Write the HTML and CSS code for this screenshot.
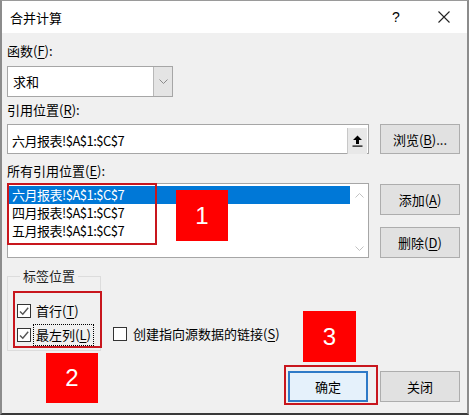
FILE: index.html
```html
<!DOCTYPE html>
<html lang="zh-CN">

<head>
    <meta charset="UTF-8">
    <title>合并计算</title>
    <link rel="stylesheet" href="styles.css">
</head>

<body>
    <div class="dialog">
        <div class="titlebar">
            <span class="title">合并计算</span>
            <span class="cap-btn help">?</span>
            <span class="cap-btn close">
                <svg width="12" height="12" viewBox="0 0 12 12"><path d="M0.5 0.5L11.5 11.5M11.5 0.5L0.5 11.5" stroke="#222" stroke-width="1.1" fill="none"/></svg>
            </span>
        </div>

        <div class="content">
            <div class="label lbl-func">函数(<u>F</u>):</div>
            <div class="combo">
                <span class="combo-text">求和</span>
                <span class="combo-arrow">
                    <svg width="9" height="5" viewBox="0 0 9 5"><path d="M0.5 0.5L4.5 4.5L8.5 0.5" stroke="#8a8a8a" fill="none"/></svg>
                </span>
            </div>

            <div class="label lbl-ref">引用位置(<u>R</u>):</div>
            <div class="row ref-row">
                <div class="ref-input">
                    <span class="ref-text ref-str">六月报表!$A$1:$C$7</span>
                    <span class="collapse-btn">
                        <svg width="11" height="12" viewBox="0 0 11 12"><path d="M5.5 0.5L10 5H7V9H4V5H1Z" fill="#000"/><rect x="0.5" y="10.5" width="10" height="1.2" fill="#000"/></svg>
                    </span>
                </div>
                <button class="btn">浏览(<u>B</u>)...</button>
            </div>

            <div class="label lbl-all">所有引用位置(<u>E</u>):</div>
            <div class="row list-row">
                <div class="listbox">
                    <div class="items">
                        <div class="item selected"><span class="ref-str">六月报表!$A$1:$C$7</span></div>
                        <div class="item"><span class="ref-str">四月报表!$A$1:$C$7</span></div>
                        <div class="item"><span class="ref-str">五月报表!$A$1:$C$7</span></div>
                    </div>
                    <div class="scroll">
                        <svg width="9" height="5" viewBox="0 0 9 5"><path d="M0.5 4.5L4.5 0.5L8.5 4.5" stroke="#c2c2c2" fill="none"/></svg>
                        <svg width="9" height="5" viewBox="0 0 9 5"><path d="M0.5 0.5L4.5 4.5L8.5 0.5" stroke="#c2c2c2" fill="none"/></svg>
                    </div>
                </div>
                <div class="btn-col">
                    <button class="btn">添加(<u>A</u>)</button>
                    <button class="btn">删除(<u>D</u>)</button>
                </div>
            </div>

            <div class="row bottom-row">
                <fieldset class="group">
                    <legend>标签位置</legend>
                    <div class="check">
                        <span class="box checked"></span>
                        <span class="check-label">首行(<u>T</u>)</span>
                    </div>
                    <div class="check">
                        <span class="box checked"></span>
                        <span class="check-label focused">最左列(<u>L</u>)</span>
                    </div>
                </fieldset>
                <div class="check link-check">
                    <span class="box"></span>
                    <span class="check-label">创建指向源数据的链接(<u>S</u>)</span>
                </div>
            </div>

            <div class="row actions">
                <button class="btn default">确定</button>
                <button class="btn">关闭</button>
            </div>
        </div>
    </div>

    <!-- annotations drawn over the dialog -->
    <div class="frame frame-list"></div>
    <div class="tag tag-1">1</div>
    <div class="frame frame-checks"></div>
    <div class="tag tag-2">2</div>
    <div class="tag tag-3">3</div>
    <div class="frame frame-ok"></div>
</body>

</html>
```

FILE: styles.css
```css
body {
    margin: 0;
    position: relative;
    font-family: "Noto Sans CJK SC", "Noto Sans", sans-serif;
    font-size: 13px;
    color: #000;
}

.dialog {
    width: 469px;
    height: 415px;
    box-sizing: border-box;
    background-color: #f0f0f0;
    border-top: 1px solid #9a9a9a;
    border-left: 2px solid #8c8c8c;
    border-right: 2px solid #8c8c8c;
    border-bottom: 2px solid #3a3a3a;
    display: flex;
    flex-direction: column;
}

.titlebar {
    height: 32px;
    background-color: #fff;
    display: flex;
    align-items: center;
    padding-left: 8px;
}

.title {
    flex: 1;
    font-size: 13px;
}

.cap-btn {
    width: 46px;
    height: 32px;
    display: flex;
    justify-content: center;
    align-items: center;
}

.help {
    font-size: 14px;
    font-family: "Liberation Sans", sans-serif;
    width: 50px;
}

.content {
    padding: 0 7px 0 5px;
}

.label {
    height: 18px;
    line-height: 18px;
}

.lbl-func {
    margin-top: 9px;
}

.lbl-ref {
    margin-top: 4px;
}

.lbl-all {
    margin-top: 8px;
}

u {
    text-decoration-thickness: 1px;
    text-underline-offset: 2px;
}

.row {
    display: flex;
}

.ref-str {
    font-size: 13px;
    letter-spacing: -0.5px;
}

.combo {
    margin-top: 6px;
    width: 166px;
    height: 31px;
    box-sizing: border-box;
    border: 1px solid #a6a6a6;
    background-color: #fff;
    display: flex;
}

.combo-text {
    flex: 1;
    line-height: 29px;
    padding-left: 5px;
}

.combo-arrow {
    width: 18px;
    background-color: #e4e4e4;
    border-left: 1px solid #b8b8b8;
    display: flex;
    justify-content: center;
    align-items: center;
}

.ref-row {
    margin-top: 5px;
    justify-content: space-between;
}

.ref-input {
    width: 362px;
    height: 30px;
    box-sizing: border-box;
    border: 1px solid #a6a6a6;
    background-color: #fff;
    display: flex;
    align-items: center;
    padding: 2px 1px 0 4px;
}

.ref-text {
    flex: 1;
}

.collapse-btn {
    width: 20px;
    height: 26px;
    box-sizing: border-box;
    background-color: #e8e8e8;
    border-left: 1px solid #c8c8c8;
    display: flex;
    justify-content: center;
    align-items: center;
    margin-bottom: -1px;
}

.btn {
    width: 80px;
    height: 30px;
    padding: 0;
    font-family: inherit;
    font-size: 13px;
    color: #000;
    background-color: #e1e1e1;
    border: 1px solid #adadad;
}

.list-row {
    margin-top: 3px;
    justify-content: space-between;
}

.listbox {
    width: 362px;
    height: 75px;
    box-sizing: border-box;
    border: 1px solid #a6a6a6;
    background-color: #fff;
    display: flex;
    padding: 2px 0 0 1px;
}

.items {
    flex: 1;
}

.item {
    height: 18px;
    line-height: 18px;
    padding-left: 3px;
}

.item.selected {
    background-color: #0078d7;
    color: #fff;
}

.scroll {
    width: 18px;
    display: flex;
    flex-direction: column;
    justify-content: space-between;
    align-items: center;
    padding: 7px 0 6px;
}

.btn-col {
    display: flex;
    flex-direction: column;
    gap: 12px;
    padding-top: 1px;
}

.btn-col .btn {
    height: 31px;
}

.bottom-row {
    margin-top: 10px;
    align-items: flex-start;
}

.group {
    width: 94px;
    height: 83px;
    box-sizing: border-box;
    margin: 0;
    padding: 15px 0 0 9px;
    border: 1px solid #dcdcdc;
}

.group legend {
    padding: 0 3px;
    margin-left: 3px;
    line-height: 16px;
    color: #222;
}

.check {
    display: flex;
    align-items: center;
    height: 24px;
}

.box {
    width: 14px;
    height: 14px;
    box-sizing: border-box;
    border: 1px solid #333;
    background-color: #fff;
    flex-shrink: 0;
}

.box.checked {
    background: #fff url("data:image/svg+xml,%3Csvg xmlns='http://www.w3.org/2000/svg' width='12' height='12'%3E%3Cpath d='M2 6.5L4.8 9.3L10.2 2.8' stroke='%23555' stroke-width='1.4' fill='none'/%3E%3C/svg%3E") center no-repeat;
}

.check-label {
    margin-left: 5px;
    line-height: 18px;
}

.check-label.focused {
    margin-left: 2px;
    padding: 1px 2px 1px 2px;
    border: 1px dotted #000;
}

.link-check {
    margin-top: 54px;
    margin-left: 12px;
}

.link-check .check-label {
    margin-left: 6px;
}

.actions {
    margin-top: 20px;
    justify-content: flex-end;
    gap: 12px;
}

.actions .btn {
    height: 31px;
}

.btn.default {
    background-color: #e5f1fb;
    border: 2px solid #2f7ac7;
}

.frame {
    position: absolute;
    box-sizing: border-box;
    border: 2px solid #c8161d;
}

.frame-list {
    left: 7px;
    top: 183px;
    width: 150px;
    height: 62px;
}

.frame-checks {
    left: 13px;
    top: 291px;
    width: 89px;
    height: 57px;
}

.frame-ok {
    left: 284px;
    top: 365px;
    width: 94px;
    height: 40px;
}

.tag {
    position: absolute;
    width: 52px;
    height: 51px;
    background-color: #ff0000;
    color: #fff;
    font-family: "Liberation Sans", sans-serif;
    font-size: 24px;
    display: flex;
    justify-content: center;
    align-items: center;
}

.tag-1 {
    left: 176px;
    top: 190px;
}

.tag-2 {
    left: 46px;
    top: 353px;
    height: 50px;
}

.tag-3 {
    left: 303px;
    top: 311px;
    width: 53px;
}
```
